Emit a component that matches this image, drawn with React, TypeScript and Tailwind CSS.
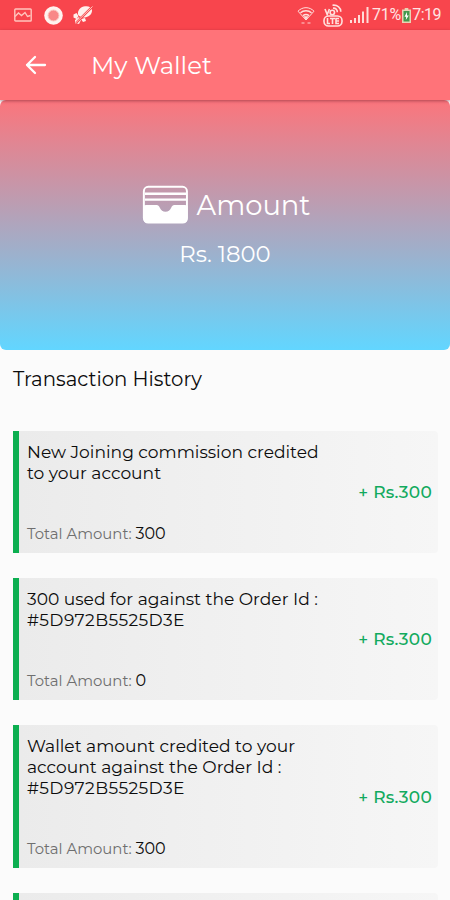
import { clsx } from "clsx";

type Transaction = {
  lines: string[];
  total: string;
  amount: string;
};

const orderId = "#5D972B5525D3E";

const transactions: Transaction[] = [
  {
    lines: ["New Joining commission credited", "to your account"],
    total: "300",
    amount: "+ Rs.300",
  },
  {
    lines: ["300 used for against the Order Id :", orderId],
    total: "0",
    amount: "+ Rs.300",
  },
  {
    lines: ["Wallet amount credited to your", "account against the Order Id :", orderId],
    total: "300",
    amount: "+ Rs.300",
  },
];

export default function App() {
  return (
    <div className="flex h-[900px] w-[450px] flex-col overflow-hidden bg-[#fbfbfb] font-['Montserrat','Inter',sans-serif] text-[#0c0c0c]">
      <StatusBar />
      <header className="z-10 flex h-[70px] shrink-0 items-center bg-[#ff7379] pl-[25px] text-white shadow-[0_1px_3px_rgba(110,30,45,0.55)]">
        <BackIcon />
        <h1 className="ml-[44px] pb-px text-[24.4px] leading-[30px]">My Wallet</h1>
      </header>

      <section className="flex h-[250px] shrink-0 flex-col items-center rounded-[6px] bg-[linear-gradient(180deg,#fb757c_0%,#62d6ff_100%)] pt-[85px] text-white">
        <div className="flex h-10 items-center gap-[8px] pl-[2px]">
          <WalletIcon />
          <span className="pb-px text-[27.4px] leading-10">Amount</span>
        </div>
        <p className="mt-[15px] text-[22.8px] leading-[28px]">Rs. 1800</p>
      </section>

      <h2 className="mt-[15px] h-[28px] shrink-0 pl-[13px] text-[19.7px] leading-[28px]">
        Transaction History
      </h2>

      <ul className="mt-[38px] flex flex-col gap-[25px] pl-[13px] pr-[12px]">
        {transactions.map((transaction, index) => (
          <TransactionCard key={index} transaction={transaction} />
        ))}
        {/* top edge of the next card, below the fold */}
        <li className="h-[122px] shrink-0 rounded-r-[4px] border-l-[6px] border-[#0caf50] bg-[linear-gradient(90deg,#ebebeb_0%,#f6f6f6_100%)]" />
      </ul>
    </div>
  );
}

function TransactionCard({ transaction }: { transaction: Transaction }) {
  return (
    <li className="flex shrink-0 items-center justify-between rounded-r-[4px] border-l-[6px] border-[#0caf50] bg-[linear-gradient(90deg,#ebebeb_0%,#f6f6f6_100%)] pl-2 pr-[6px]">
      <div className="pb-[9px] pt-[10px]">
        {transaction.lines.map((line) => (
          <p
            key={line}
            className={clsx(
              "whitespace-nowrap text-[17.1px] leading-[21px]",
              line === orderId && "tracking-[0.4px]"
            )}
          >
            {line}
          </p>
        ))}
        <p className="mt-[41px] text-[14.9px] leading-[20px] text-[#6f6f6f]">
          Total Amount:{" "}
          <span className="text-[16px] text-[#0c0c0c]">{transaction.total}</span>
        </p>
      </div>
      <span className="whitespace-nowrap text-[17px] font-medium leading-5 tracking-[0.25px] text-[#12aa5e]">
        {transaction.amount}
      </span>
    </li>
  );
}

function StatusBar() {
  return (
    <div className="flex h-[30px] shrink-0 items-center bg-[#f8454d] pl-[14px] pr-[9px] text-[#ffe3e3]">
      <svg width="18" height="14" viewBox="0 0 18 14" fill="none" stroke="#ffc5bd" strokeWidth="1.4">
        <rect x="0.8" y="1" width="16.4" height="12" rx="0.8" />
        <path d="M1 8.5 4.5 5l3 2.5L11 4.5l2.5 4 3-1" />
      </svg>
      <svg className="ml-[12px]" width="19" height="19" viewBox="0 0 19 19">
        <circle cx="9.5" cy="9.5" r="9.3" fill="#fff3ef" />
        <circle cx="9.5" cy="9.5" r="5.4" fill="#f98887" stroke="#fac0bb" strokeWidth="1" />
      </svg>
      <svg className="ml-[9px]" width="22" height="20" viewBox="0 0 22 20">
        <path
          d="M6 9.5C5.5 5 9 1.5 13 1.3c3.5-.5 6.5.7 7 3.7.3 3.5-2.5 6.5-6 7.2-2.5.6-6 .3-8-2.7Z"
          fill="#fff0ec"
        />
        <path d="M1.5 9.5 4.5 8l2 3-2 3-3-1.5Z M3 15l4-3 2 3-2 4-4-1Z M9 14l4-1 1 3-3 1Z" fill="#fff0ec" />
        <path d="M4 18 20 2" stroke="#f8454d" strokeWidth="2.4" />
        <path d="M3.5 18 20.5 1.5" stroke="#ffc9bd" strokeWidth="1" />
      </svg>

      <div className="ml-auto flex items-center">
        <svg width="18" height="19" viewBox="0 0 18 19" fill="none" stroke="#ffe0dd" strokeWidth="1.5">
          <path d="M1 5.2C5.5.5 12.5.5 17 5.2L9 14Z" strokeWidth="1" />
          <path d="M3.5 6.8c3-2.8 8-2.8 11 0M6 9.7c1.8-1.5 4.2-1.5 6 0" />
          <path d="M7 10.5h4L9 14Z" fill="#ffe0dd" strokeWidth="0.5" />
          <path d="M4.5 17h3M10.5 17h3" strokeWidth="1.4" opacity="0.6" />
        </svg>
        <VolteIcon />
        <svg className="ml-[7px]" width="19" height="17" viewBox="0 0 19 17" fill="#ffdcd8">
          <path d="M0 13h2v3H0zM4 11h2v5H4zM8 8h2v8H8zM12 4.5h2V16h-2zM16.5 0h2v16h-2z" />
        </svg>
        <span className="ml-[3px] font-['Roboto',sans-serif] text-[16px] leading-5 tracking-[-0.2px]">
          71%
        </span>
        <svg className="mx-px" width="9" height="15" viewBox="0 0 9 15">
          <path d="M2.7 0h3.6v1.5H9V15H0V1.5h2.7Z" fill="#e7d4b4" />
          <path d="M1.5 3h6v10.5h-6Z" fill="#44984d" />
          <path d="M5 4 2.5 8.7h1.7L3.8 12 6.8 7.5H5Z" fill="#fff" />
        </svg>
        <span className="font-['Roboto',sans-serif] text-[16px] leading-5 tracking-[-0.5px]">
          7:19
        </span>
      </div>
    </div>
  );
}

function VolteIcon() {
  return (
    <svg
      className="ml-[8px]"
      width="20"
      height="23"
      viewBox="0 0 20 23"
      fill="none"
      stroke="#ffe0dd"
      strokeWidth="1.6"
    >
      <path d="M2 5l2.2 5.5L6.4 5" />
      <circle cx="9.3" cy="8.5" r="2.2" />
      <path d="M10 4.2c2.5-.3 4.5 1.5 4.3 4M9.5 1.2c5-.5 8.5 2.5 8.3 6.5" />
      <rect x="1" y="12" width="18" height="10" rx="4.5" />
      <path d="M4.5 14v5.5H7M7 14.5h5M9.5 14.5v5.5M16 14.5h-3v5h3M13 17h3" />
    </svg>
  );
}

function BackIcon() {
  return (
    <svg
      width="22"
      height="20"
      viewBox="0 0 22 20"
      fill="none"
      stroke="currentColor"
      strokeWidth="2.3"
      strokeLinecap="round"
      strokeLinejoin="round"
    >
      <path d="M10 2 2 10l8 8M2 10h18" />
    </svg>
  );
}

function WalletIcon() {
  return (
    <svg width="47" height="40" viewBox="0 0 48 40" fill="none">
      <rect x="1.9" y="1.4" width="44" height="36.5" rx="4.5" stroke="#fff" strokeWidth="2" />
      <path d="M3 8.5h42M3 14.5h42" stroke="#fff" strokeWidth="2.4" />
      <path
        d="M1.5 21Q2 20 4.5 20H15c1.5 0 2.3.8 3.2 2.8 1.3 2.7 3 4.2 5.8 4.2s4.5-1.5 5.8-4.2C30.7 20.8 31.5 20 33 20h10.5q2.5 0 3 1V34q0 4.5-5 4.5H6.5q-5 0-5-4.5Z"
        fill="#fff"
      />
    </svg>
  );
}
